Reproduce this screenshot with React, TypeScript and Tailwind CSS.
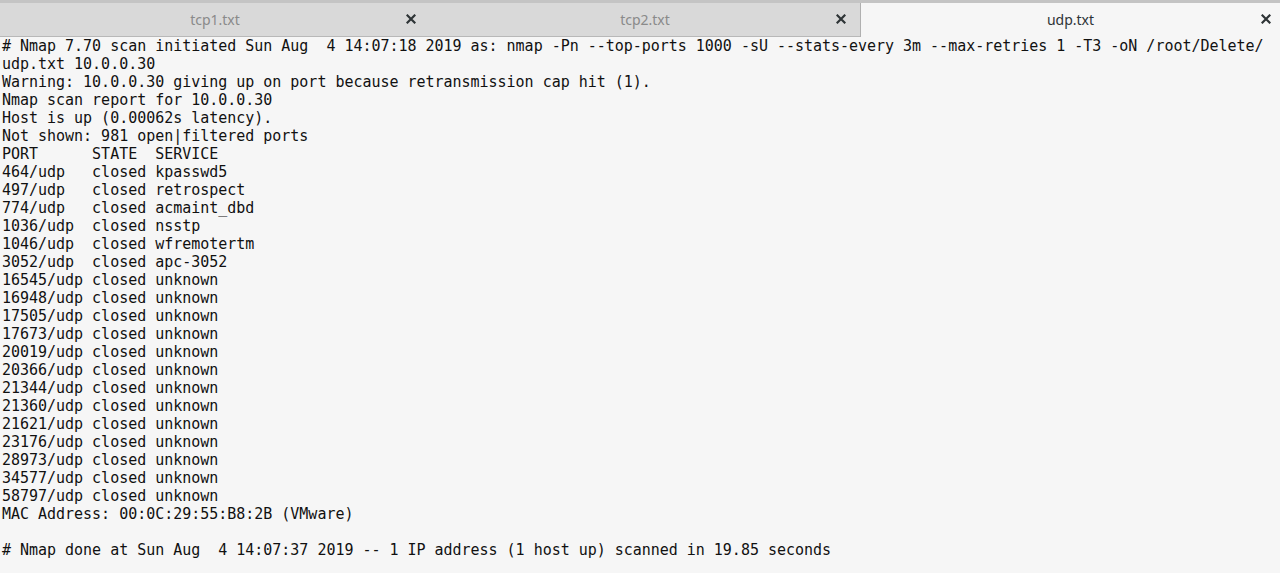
const lines = [
  "# Nmap 7.70 scan initiated Sun Aug  4 14:07:18 2019 as: nmap -Pn --top-ports 1000 -sU --stats-every 3m --max-retries 1 -T3 -oN /root/Delete/",
  "udp.txt 10.0.0.30",
  "Warning: 10.0.0.30 giving up on port because retransmission cap hit (1).",
  "Nmap scan report for 10.0.0.30",
  "Host is up (0.00062s latency).",
  "Not shown: 981 open|filtered ports",
  "PORT      STATE  SERVICE",
  "464/udp   closed kpasswd5",
  "497/udp   closed retrospect",
  "774/udp   closed acmaint_dbd",
  "1036/udp  closed nsstp",
  "1046/udp  closed wfremotertm",
  "3052/udp  closed apc-3052",
  "16545/udp closed unknown",
  "16948/udp closed unknown",
  "17505/udp closed unknown",
  "17673/udp closed unknown",
  "20019/udp closed unknown",
  "20366/udp closed unknown",
  "21344/udp closed unknown",
  "21360/udp closed unknown",
  "21621/udp closed unknown",
  "23176/udp closed unknown",
  "28973/udp closed unknown",
  "34577/udp closed unknown",
  "58797/udp closed unknown",
  "MAC Address: 00:0C:29:55:B8:2B (VMware)",
  "",
  "# Nmap done at Sun Aug  4 14:07:37 2019 -- 1 IP address (1 host up) scanned in 19.85 seconds",
];

// 굵은 X 닫기 아이콘
const CloseIcon = () => (
  <svg width="10" height="10" viewBox="0 0 10 10">
    <path d="M1.5 1.5 L8.5 8.5 M8.5 1.5 L1.5 8.5" stroke="#2e3436" strokeWidth="2.2" strokeLinecap="square" />
  </svg>
);

const App = () => {
  return (
    <main className="w-[1280px] h-[573px] overflow-hidden bg-[#f6f6f6]">
      <div className="flex h-[37px] bg-[#d9d9d9] border-t-[3px] border-[#c4c4c4] border-b border-b-[#b8b8b8]">
        <div className="relative flex w-[430px] items-center justify-center pb-px">
          <span className="text-[14px] text-[#8a8a8a] font-['Noto_Sans',sans-serif]">tcp1.txt</span>
          <span className="absolute right-[14px] top-[11px] flex">
            <CloseIcon />
          </span>
        </div>
        <div className="relative flex w-[430px] items-center justify-center pb-px">
          <span className="text-[14px] text-[#8a8a8a] font-['Noto_Sans',sans-serif]">tcp2.txt</span>
          <span className="absolute right-[14px] top-[11px] flex">
            <CloseIcon />
          </span>
        </div>
        <div className="relative flex flex-1 items-center justify-center bg-[#f6f6f6] border-l border-[#b0b0b0] -mb-px pb-px">
          <span className="text-[14px] text-[#2e3436] font-['Noto_Sans',sans-serif]">udp.txt</span>
          <span className="absolute right-[9px] top-[11px] flex">
            <CloseIcon />
          </span>
        </div>
      </div>
      <div className="pl-[2px] font-['DejaVu_Sans_Mono',monospace] text-[15px] tracking-[-0.02px] leading-[18px] text-[#111]">
        {lines.map((line, index) => (
          <div key={index} className="whitespace-pre h-[18px]">
            {line}
          </div>
        ))}
      </div>
    </main>
  );
};

export default App;
